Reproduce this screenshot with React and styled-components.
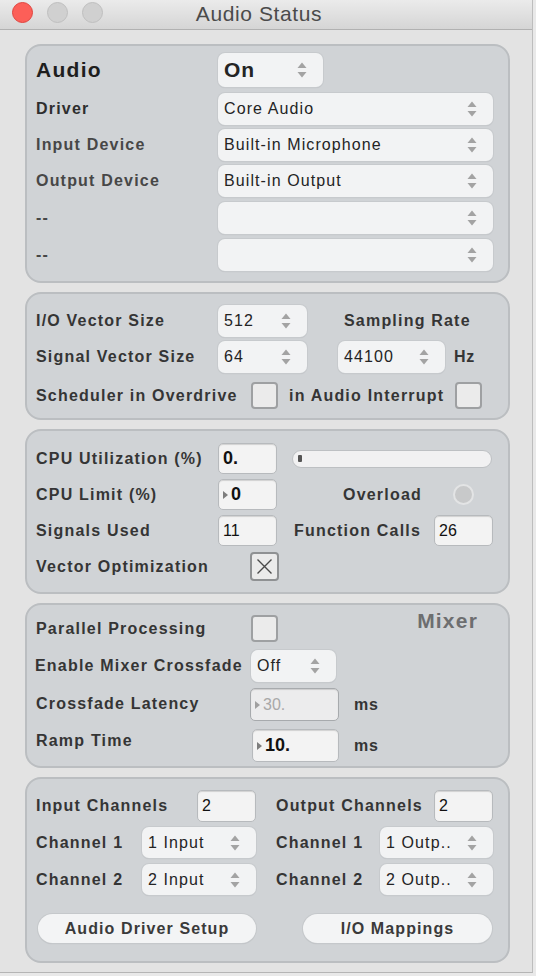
import React from 'react';
import styled, { createGlobalStyle } from 'styled-components';

const GlobalStyle = createGlobalStyle`
  html, body { margin: 0; padding: 0; }
  body {
    width: 536px;
    height: 976px;
    overflow: hidden;
    background: #e9e9e9;
    font-family: "Liberation Sans", Arial, Helvetica, sans-serif;
  }
  #root { width: 536px; height: 976px; }
`;

const Window = styled.div`
  width: 533px;
  height: 973px;
  box-sizing: border-box;
  background: #e3e3e3;
  border-right: 1px solid #bdbdbd;
  border-bottom: 1px solid #b5b5b5;
  display: flex;
  flex-direction: column;
`;

const TitleBar = styled.div`
  flex: none;
  height: 30px;
  box-sizing: border-box;
  display: grid;
  grid-template-columns: 110px 1fr 124px;
  align-items: start;
  background: linear-gradient(#ebebeb, #d5d5d5);
  border-bottom: 1px solid #b1b1b1;
`;

const Lights = styled.div`
  display: flex;
  gap: 14px;
  padding: 2px 0 0 12px;
`;

const Light = styled.span`
  width: 21px;
  height: 21px;
  box-sizing: border-box;
  border-radius: 50%;
  background: ${p => (p.$red ? '#fc5f58' : '#d0d0d0')};
  border: 1px solid ${p => (p.$red ? '#e0443e' : '#bfbfbf')};
`;

const Title = styled.div`
  text-align: center;
  font-size: 21px;
  line-height: 28px;
  color: #4b4b4b;
  letter-spacing: 0.6px;
`;

const Content = styled.div`
  display: flex;
  flex-direction: column;
  gap: 9px;
  padding: 14px 0 0 25px;
`;

const Panel = styled.section`
  box-sizing: border-box;
  width: 485px;
  height: ${p => p.$h}px;
  background: #d0d3d6;
  border: 2px solid #bbbec1;
  border-radius: 16px;
  padding: ${p => p.$pt}px 14px 0 9px;
  display: flex;
  flex-direction: column;
  gap: ${p => p.$gap}px;
`;

const Row = styled.div`
  flex: none;
  display: flex;
  align-items: center;
  height: ${p => p.$h || 32}px;
  margin-top: ${p => p.$mt || 0}px;
`;

const Half = styled.div`
  flex: none;
  width: ${p => p.$w}px;
  margin-left: ${p => p.$ml || 0}px;
  display: flex;
  align-items: center;
  justify-content: space-between;
`;

const Label = styled.span`
  flex: none;
  box-sizing: border-box;
  width: ${p => (p.$w ? `${p.$w}px` : 'auto')};
  margin-left: ${p => p.$ml || 0}px;
  margin-bottom: ${p => p.$lift || 0}px;
  font-size: ${p => p.$size || 16}px;
  font-weight: 700;
  letter-spacing: ${p => (p.$size ? 1.3 : 1.2)}px;
  color: ${p => p.$color || '#353535'};
  text-align: ${p => p.$align || 'left'};
  white-space: nowrap;
`;

const Unit = styled.span`
  flex: none;
  margin-left: ${p => p.$ml}px;
  font-size: 16px;
  font-weight: 700;
  letter-spacing: 0.8px;
  color: #353535;
`;

const SelectBox = styled.div`
  flex: none;
  box-sizing: border-box;
  width: ${p => p.$w}px;
  height: ${p => p.$h || 32}px;
  margin-left: ${p => p.$ml || 0}px;
  display: flex;
  align-items: center;
  justify-content: space-between;
  padding: 0 16px 0 6px;
  background: #f2f3f4;
  border-radius: 7px;
  box-shadow: 0 0 0 1px #c7cacd, 0 1px 1px rgba(0, 0, 0, 0.12);
  font-size: ${p => (p.$big ? 21 : 16)}px;
  font-weight: ${p => (p.$big ? 700 : 400)};
  letter-spacing: ${p => (p.$big ? 0.8 : 1.1)}px;
  color: #242424;
  white-space: nowrap;
`;

const NumBox = styled.div`
  flex: none;
  box-sizing: border-box;
  width: ${p => p.$w}px;
  height: ${p => p.$h || 31}px;
  margin-left: ${p => p.$ml || 0}px;
  display: flex;
  align-items: center;
  gap: 3px;
  padding-left: 4px;
  background: ${p => (p.$disabled ? '#ececed' : '#f3f3f3')};
  border: 1px solid ${p => (p.$disabled ? '#a7aaad' : '#b7babd')};
  border-radius: 5px;
  box-shadow: inset 0 1px 1px rgba(0, 0, 0, 0.14);
  font-size: ${p => (p.$strong ? 18 : 16)}px;
  font-weight: ${p => (p.$strong ? 700 : 400)};
  color: ${p => (p.$disabled ? '#a8a8a8' : '#111')};
`;

const Tri = styled.span`
  flex: none;
  width: 0;
  height: 0;
  border-left: 5px solid ${p => (p.$light ? '#a0a0a0' : '#7d7d7d')};
  border-top: 4px solid transparent;
  border-bottom: 4px solid transparent;
`;

const Check = styled.div`
  flex: none;
  box-sizing: border-box;
  width: ${p => (p.$checked ? 29 : 27)}px;
  height: ${p => (p.$checked ? 29 : 27)}px;
  margin-left: ${p => p.$ml || 0}px;
  display: flex;
  align-items: center;
  justify-content: center;
  background: #ebebeb;
  border: 2px solid ${p => (p.$checked ? '#8f9193' : '#9ea0a2')};
  border-radius: 4px;
`;

const Progress = styled.div`
  flex: none;
  box-sizing: border-box;
  width: 200px;
  height: 18px;
  margin-left: 15px;
  display: flex;
  align-items: center;
  padding-left: 5px;
  background: #f1f1f2;
  border: 1px solid #bdc0c3;
  border-radius: 9px;
`;

const Mark = styled.span`
  width: 4px;
  height: 7px;
  background: #555;
  border-radius: 1px;
`;

const Led = styled.span`
  flex: none;
  box-sizing: border-box;
  width: 21px;
  height: 21px;
  margin-left: 31px;
  border-radius: 50%;
  background: #c8c9ca;
  border: 2px solid #e3e4e5;
`;

const Mixer = styled.span`
  margin-left: auto;
  margin-right: 16px;
  align-self: flex-start;
  margin-top: -6px;
  font-size: 21px;
  font-weight: 700;
  letter-spacing: 1.2px;
  color: #6d6e70;
`;

const PillButton = styled.button`
  flex: none;
  box-sizing: border-box;
  width: ${p => p.$w}px;
  height: 29px;
  margin-left: ${p => p.$ml || 0}px;
  padding: 0;
  border: none;
  border-radius: 15px;
  background: #f3f4f5;
  box-shadow: 0 0 0 1px #c5c8cb, 0 1px 1px rgba(0, 0, 0, 0.15);
  font-family: inherit;
  font-size: 16px;
  font-weight: 700;
  letter-spacing: 1.1px;
  color: #3a3a3a;
`;

const Arrows = () => (
  <svg width="10" height="20" viewBox="0 0 10 20" aria-hidden="true">
    <path d="M5 2.5 L9.5 8 H0.5 Z" fill="#a3a3a3" />
    <path d="M0.5 12 H9.5 L5 17.5 Z" fill="#a3a3a3" />
  </svg>
);

const XMark = () => (
  <svg width="17" height="17" viewBox="0 0 17 17" aria-hidden="true">
    <path d="M1.5 1.5 L15.5 15.5 M15.5 1.5 L1.5 15.5" stroke="#4a4a4a" strokeWidth="1.4" />
  </svg>
);

const Select = ({ children, ...rest }) => (
  <SelectBox {...rest}>
    <span>{children}</span>
    <Arrows />
  </SelectBox>
);

export default function App() {
  return (
    <>
      <GlobalStyle />
      <Window>
        <TitleBar>
          <Lights>
            <Light $red />
            <Light />
            <Light />
          </Lights>
          <Title>Audio Status</Title>
          <span />
        </TitleBar>

        <Content>
          <Panel $h={239} $pt={7} $gap={4}>
            <Row $h={34}>
              <Label $w={182} $size={21} $color="#1e1e1e">Audio</Label>
              <Select $w={105} $h={34} $big>On</Select>
            </Row>
            <Row $mt={2}>
              <Label $w={182} $color="#2e2e2e">Driver</Label>
              <Select $w={275}>Core Audio</Select>
            </Row>
            <Row>
              <Label $w={182} $color="#474747">Input Device</Label>
              <Select $w={275}>Built-in Microphone</Select>
            </Row>
            <Row>
              <Label $w={182} $color="#474747">Output Device</Label>
              <Select $w={275}>Built-in Output</Select>
            </Row>
            <Row $mt={1}>
              <Label $w={182} $color="#474747">--</Label>
              <Select $w={275} />
            </Row>
            <Row $mt={1}>
              <Label $w={182} $color="#474747">--</Label>
              <Select $w={275} />
            </Row>
          </Panel>

          <Panel $h={128} $pt={11} $gap={4}>
            <Row>
              <Label $w={182}>I/O Vector Size</Label>
              <Select $w={89}>512</Select>
              <Label $ml={37}>Sampling Rate</Label>
            </Row>
            <Row>
              <Label $w={182}>Signal Vector Size</Label>
              <Select $w={89}>64</Select>
              <Select $w={107} $ml={31}>44100</Select>
              <Unit $ml={9}>Hz</Unit>
            </Row>
            <Row $h={27} $mt={5}>
              <Label $w={215}>Scheduler in Overdrive</Label>
              <Check />
              <Label $w={166} $ml={11}>in Audio Interrupt</Label>
              <Check />
            </Row>
          </Panel>

          <Panel $h={165} $pt={12} $gap={5}>
            <Row $h={31}>
              <Label $w={182}>CPU Utilization (%)</Label>
              <NumBox $w={59} $strong>0.</NumBox>
              <Progress>
                <Mark />
              </Progress>
            </Row>
            <Row $h={31}>
              <Label $w={182}>CPU Limit (%)</Label>
              <NumBox $w={59} $strong>
                <Tri />0
              </NumBox>
              <Label $w={145} $align="right">Overload</Label>
              <Led />
            </Row>
            <Row $h={31}>
              <Label $w={182}>Signals Used</Label>
              <NumBox $w={59}>11</NumBox>
              <Label $w={130} $ml={17}>Function Calls</Label>
              <NumBox $w={59} $ml={10}>26</NumBox>
            </Row>
            <Row $h={31}>
              <Label $w={214}>Vector Optimization</Label>
              <Check $checked>
                <XMark />
              </Check>
            </Row>
          </Panel>

          <Panel $h={165} $pt={10} $gap={8}>
            <Row $h={27}>
              <Label $w={215}>Parallel Processing</Label>
              <Check />
              <Mixer>Mixer</Mixer>
            </Row>
            <Row $h={31}>
              <Label $w={216} $ml={-1}>Enable Mixer Crossfade</Label>
              <Select $w={85}>Off</Select>
            </Row>
            <Row $h={33} $mt={-1}>
              <Label $w={214} $lift={2}>Crossfade Latency</Label>
              <NumBox $w={89} $h={33} $disabled>
                <Tri $light />30.
              </NumBox>
              <Unit $ml={15}>ms</Unit>
            </Row>
            <Row $h={33}>
              <Label $w={216} $lift={10}>Ramp Time</Label>
              <NumBox $w={87} $h={33} $strong>
                <Tri />10.
              </NumBox>
              <Unit $ml={15}>ms</Unit>
            </Row>
          </Panel>

          <Panel $h={186} $pt={11} $gap={5}>
            <Row>
              <Half $w={220}>
                <Label>Input Channels</Label>
                <NumBox $w={59} $h={32}>2</NumBox>
              </Half>
              <Half $w={217} $ml={20}>
                <Label>Output Channels</Label>
                <NumBox $w={59} $h={32}>2</NumBox>
              </Half>
            </Row>
            <Row $h={31}>
              <Half $w={220}>
                <Label>Channel 1</Label>
                <Select $w={114} $h={31}>1 Input</Select>
              </Half>
              <Half $w={217} $ml={20}>
                <Label>Channel 1</Label>
                <Select $w={113} $h={31}>1 Outp..</Select>
              </Half>
            </Row>
            <Row $h={31} $mt={1}>
              <Half $w={220}>
                <Label>Channel 2</Label>
                <Select $w={114} $h={31}>2 Input</Select>
              </Half>
              <Half $w={217} $ml={20}>
                <Label>Channel 2</Label>
                <Select $w={113} $h={31}>2 Outp..</Select>
              </Half>
            </Row>
            <Row $h={29} $mt={14}>
              <PillButton $w={218} $ml={2}>Audio Driver Setup</PillButton>
              <PillButton $w={189} $ml={47}>I/O Mappings</PillButton>
            </Row>
          </Panel>
        </Content>
      </Window>
    </>
  );
}
